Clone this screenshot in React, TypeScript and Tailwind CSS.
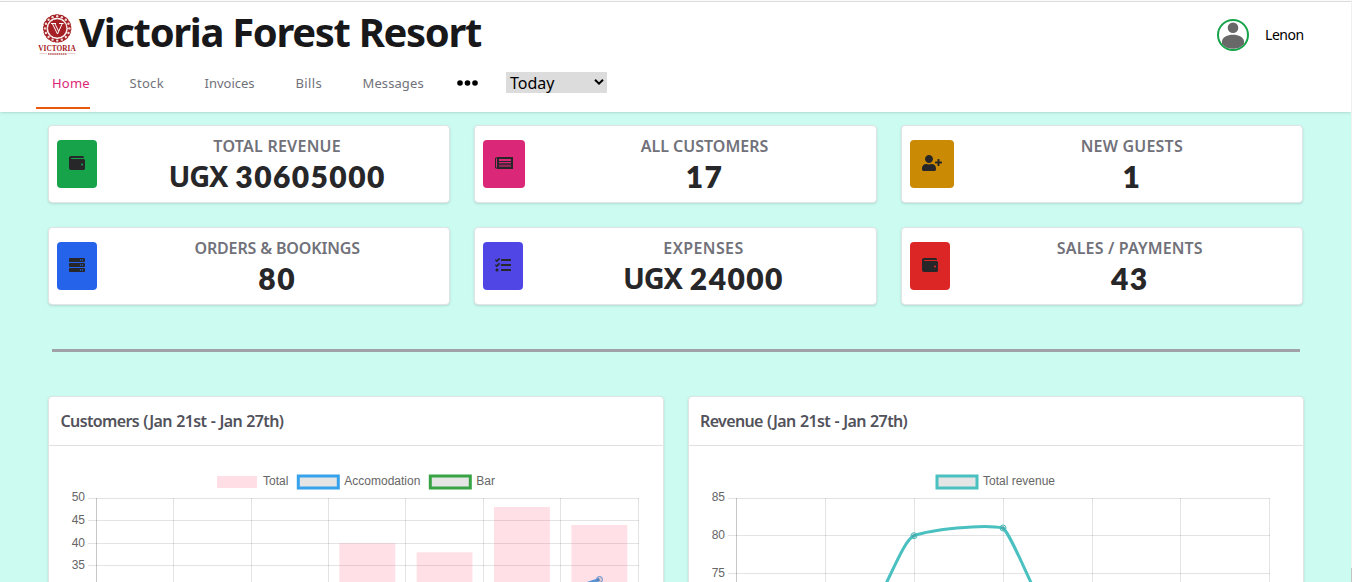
import type { ReactNode } from "react";
import { FaWallet, FaUserPlus, FaServer, FaTasks } from "react-icons/fa";

function Logo() {
  const beads = Array.from({ length: 16 }, (_, i) => (i * Math.PI) / 8);
  return (
    <svg className="h-[42px] w-[40px] shrink-0 overflow-visible" viewBox="37 14 40 42" aria-label="Victoria">
      <circle cx="57.2" cy="28.4" r="12.4" fill="none" stroke="#a52024" strokeWidth="3.6" />
      {beads.map((a) => (
        <circle key={a} cx={57.2 + 12.2 * Math.cos(a)} cy={28.4 + 12.2 * Math.sin(a)} r="1.200" fill="#f3dcdc" />
      ))}
      {beads.map((a) => (
        <circle key={a} cx={57.2 + 14.4 * Math.cos(a + 0.196)} cy={28.4 + 14.4 * Math.sin(a + 0.196)} r="0.700" fill="#fff" />
      ))}
      <circle cx="57.2" cy="28.4" r="9.6" fill="#a52024" stroke="#ffffff" strokeWidth="0.8" />
      <path d="M51 23.500h5M59 23.500h4.500M52.300 23.500l5.200 10.500L62.300 23.500M54.800 23.500l3.900 7.800" fill="none" stroke="#fff" strokeWidth="1" />
      <text x="38.300" y="51.200" textLength="37.400" lengthAdjust="spacingAndGlyphs" fill="#a52024" className="font-['Liberation_Serif'] text-[8.5px] font-bold">VICTORIA</text>
      <path d="M39.500 53.500h7.500M67.500 53.500h8" stroke="#dcb0b0" strokeWidth="0.6" />
      <path d="M48 54h19" stroke="#b85a5c" strokeWidth="1.600" strokeDasharray="1.6 0.5" />
    </svg>
  );
}

function Avatar() {
  return (
    <span className="size-8 overflow-hidden rounded-full border-2 border-[#16a34a] bg-white">
      <svg viewBox="0 0 28 28" className="size-7">
        <circle cx="14" cy="6.700" r="5.300" fill="#686868" />
        <path d="M3 20.500C3 16.500 8.500 13.800 14 13.800S25 16.500 25 20.500V24C21 29 7 29 3 24Z" fill="#686868" />
      </svg>
    </span>
  );
}

function TableIcon() {
  return (
    <svg viewBox="0 0 18 16" className="h-4 w-[18px]" fill="none" stroke="currentColor">
      <path d="M3 3H17V13H3Z" strokeWidth="2" />
      <path d="M2 3H0.500V13H3" strokeWidth="1" />
      <path d="M4 6.500H16" strokeWidth="1" />
      <path d="M4 9H16" strokeWidth="1.500" />
      <path d="M4 11H16" strokeWidth="0.800" />
    </svg>
  );
}

const links = [
  { label: "Stock", cls: "w-[35px] tracking-[0.3px]" },
  { label: "Invoices", cls: "w-[51px]" },
  { label: "Bills", cls: "w-[27px] tracking-[0.4px]" },
  { label: "Messages", cls: "w-[62px] tracking-[0.1px]" },
];

function Header() {
  return (
    <header className="mt-px flex h-[111px] flex-col border-t border-[#dcdcdc] bg-white shadow">
      <div className="flex h-[58px] shrink-0 items-start justify-between pl-[37px] pr-[47px]">
        <div className="flex items-start pt-3">
          <Logo />
          <h1 className="-mt-[8px] ml-[2px] whitespace-nowrap text-[40px] leading-[52px] font-bold tracking-[-1.33px] text-[#18181b]">Victoria Forest Resort</h1>
        </div>
        <div className="flex items-center gap-4 pt-[17px] text-sm text-black">
          <Avatar />
          <span className="w-[39px] whitespace-nowrap tracking-[-0.45px]">Lenon</span>
        </div>
      </div>
      <nav className="flex h-[49px] shrink-0 pl-9 text-[13px] text-[#71717a]">
        <a className="flex w-[54px] items-center border-b-2 border-[#ea580c] pl-4 tracking-[0.2px] text-[#db2777]"><span>Home</span></a>
        <div className="flex items-center gap-10 pb-[2px] pl-[39.5px]">
          {links.map((l) => (
            <a key={l.label} className={`whitespace-nowrap ${l.cls}`}>{l.label}</a>
          ))}
        </div>
        <div className="flex items-center pb-[3px] pl-[32px]">
          <svg viewBox="0 0 21 6" className="h-1.5 w-[21px]">
            <circle cx="3" cy="3" r="2.800" /><circle cx="10.500" cy="3" r="2.800" /><circle cx="18" cy="3" r="2.800" />
          </svg>
          <button className="mb-px ml-[28.5px] flex h-[21px] w-[101px] items-center justify-between bg-[#dcdcdc] pr-[3px] pl-1 text-base leading-[21px] text-black">
            <span className="pt-px">Today</span>
            <svg viewBox="0 0 10 6" className="mb-px h-1.5 w-2.5" fill="none" stroke="#000" strokeWidth="2">
              <path d="M1 0.800L5 4.600L9 0.800" />
            </svg>
          </button>
        </div>
      </nav>
    </header>
  );
}

type StatProps = { icon: ReactNode; color: string; title: string; titleClass?: string; unit?: string; value: string };

function Stat({ icon, color, title, titleClass = "", unit, value }: StatProps) {
  return (
    <div className="flex h-[78px] items-center rounded border border-[#e0e4e4] bg-white p-2 shadow">
      <div className="pr-4">
        <div className={`flex h-12 items-start rounded px-3 pt-[15px] text-base text-[#27272a] ${color}`}>{icon}</div>
      </div>
      <div className="flex-1 text-center">
        <h5 className={`text-base leading-6 font-semibold text-[#71717a] ${titleClass}`}>{title}</h5>
        <h3 className="flex justify-center gap-2 text-[29px] leading-9 font-bold text-[#27272a]">
          {unit && <span className="tracking-[-1.2px]">{unit}</span>}
          <span className="font-['Lato','Noto_Sans',sans-serif] text-[30px] font-extrabold tracking-[1.4px]">{value}</span>
        </h3>
      </div>
    </div>
  );
}

function ChartCard({ title, className = "", children }: { title: string; className?: string; children: ReactNode }) {
  return (
    <section className={`h-[400px] overflow-hidden rounded border border-[#e0e4e4] bg-white shadow ${className}`}>
      <h5 className="h-[49px] border-b border-[#e0e0e0] pl-[11.5px] leading-[48px] font-semibold tracking-[-0.64px] [word-spacing:0.8px] text-[#52525b]">{title}</h5>
      {children}
    </section>
  );
}

function Grid({ xs, ys, labels, x0, x1 }: { xs: number[]; ys: number[]; labels: string[]; x0: number; x1: number }) {
  return (
    <g shapeRendering="crispEdges">
      {ys.map((y, i) => (
        <g key={y}>
          <path d={`M${x0 - 8} ${y + 0.5}H${x1 + 1}`} stroke="rgba(0,0,0,0.11)" />
          <text x={x0 - 11} y={i ? y + 4 : y + 3} textAnchor="end" fill="#666">{labels[i]}</text>
        </g>
      ))}
      {xs.map((x, i) => (
        <path key={x} d={`M${x + 0.5} 498V600`} stroke={i ? "rgba(0,0,0,0.11)" : "rgba(0,0,0,0.22)"} />
      ))}
    </g>
  );
}

function CustomersChart() {
  return (
    <svg viewBox="49 446 614 350" width="614" height="350" className="font-['Liberation_Sans'] text-[12px]">
      <rect x="217" y="476" width="40" height="12" fill="#ffdfe5" />
      <text x="263" y="485" fill="#666">Total</text>
      <rect x="298.300" y="476" width="40" height="12" fill="#e5e5e5" stroke="#36a2eb" strokeWidth="3" />
      <text x="344.300" y="485" fill="#666">Accomodation</text>
      <rect x="430.300" y="476" width="40" height="12" fill="#e5e5e5" stroke="#37a344" strokeWidth="3" />
      <text x="476.300" y="485" fill="#666">Bar</text>
      <Grid xs={[96, 173, 251, 328, 405, 483, 560, 638]} ys={[498, 520, 543, 565]} labels={["50", "45", "40", "35"]} x0={96} x1={638} />
      <g fill="rgba(255,99,132,0.2)">
        <rect x="339.300" y="543.300" width="55.900" height="60" />
        <rect x="416.600" y="552.300" width="55.900" height="60" />
        <rect x="494" y="507" width="55.900" height="100" />
        <rect x="571.400" y="525" width="55.900" height="80" />
      </g>
      <path d="M576 587L599.500 579.500" stroke="#5b92d3" strokeWidth="3" />
      <circle cx="599.500" cy="579.500" r="3" fill="rgba(0,0,0,.1)" stroke="#5b92d3" />
    </svg>
  );
}

function RevenueChart() {
  return (
    <svg viewBox="689 446 614 350" width="614" height="350" className="font-['Liberation_Sans'] text-[12px]">
      <rect x="937" y="476" width="40" height="12" fill="#e5e5e5" stroke="#4bc0c0" strokeWidth="3" />
      <text x="983" y="485" fill="#666">Total revenue</text>
      <Grid xs={[736, 825, 914, 1003, 1092, 1180, 1269]} ys={[498, 535, 573]} labels={["85", "80", "75"]} x0={736} x1={1269} />
      <path d="M880 596C895 566 905 540 914 535.700C930 530 983 523.500 1003 528C1010 534 1023 566 1040 602" fill="none" stroke="#4bc0c0" strokeWidth="3" />
      <circle cx="914" cy="535.700" r="3" fill="rgba(0,0,0,.1)" stroke="#4bc0c0" />
      <circle cx="1003" cy="528" r="3" fill="rgba(0,0,0,.1)" stroke="#4bc0c0" />
    </svg>
  );
}

export default function App() {
  return (
    <div className="flex h-[582px] overflow-hidden bg-white font-['Noto_Sans',sans-serif]">
      <div className="h-full w-[1351px] shrink-0 overflow-hidden bg-[#ccfbf1]">
        <div className="-mt-px bg-white pt-px"><Header /></div>
        <main className="px-12">
          <div className="grid grid-cols-3 gap-6 pt-[13px]">
            <Stat icon={<FaWallet />} color="bg-[#16a34a]" title="TOTAL REVENUE" titleClass="tracking-[0.25px]" unit="UGX" value="30605000" />
            <Stat icon={<TableIcon />} color="bg-[#db2777]" title="ALL CUSTOMERS" value="17" />
            <Stat icon={<FaUserPlus className="w-5" />} color="bg-[#ca8a04]" title="NEW GUESTS" titleClass="tracking-[0.2px]" value="1" />
            <Stat icon={<FaServer />} color="bg-[#2563eb]" title="ORDERS & BOOKINGS" titleClass="tracking-[-0.15px]" value="80" />
            <Stat icon={<FaTasks />} color="bg-[#4f46e5]" title="EXPENSES" titleClass="tracking-[0.4px]" unit="UGX" value="24000" />
            <Stat icon={<FaWallet />} color="bg-[#dc2626]" title="SALES / PAYMENTS" titleClass="tracking-[0.15px]" value="43" />
          </div>
          <hr className="my-11 mr-[3px] ml-1 border-0 border-t-[3px] border-[#a1a1aa]" />
          <div className="grid grid-cols-2 gap-6">
            <ChartCard title="Customers (Jan 21st - Jan 27th)"><CustomersChart /></ChartCard>
            <ChartCard title="Revenue (Jan 21st - Jan 27th)" className="-mr-px"><RevenueChart /></ChartCard>
          </div>
        </main>
      </div>
      <div className="flex w-px flex-col justify-end bg-[#f0f0f0]"><div className="h-3.5 bg-[#c4c4c4]" /></div>
    </div>
  );
}
